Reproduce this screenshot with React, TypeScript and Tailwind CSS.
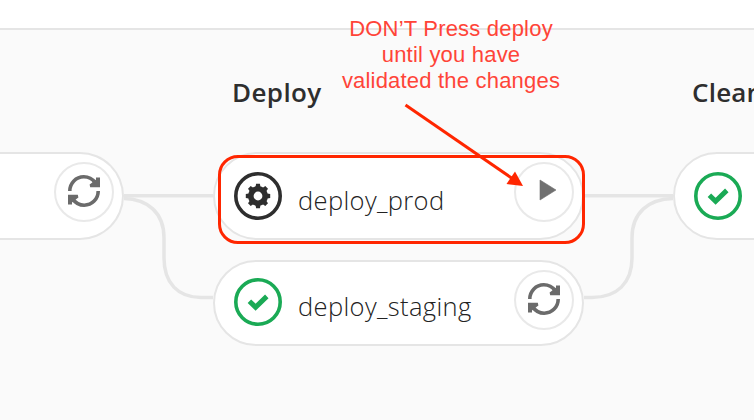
import type { ReactNode } from "react";

function RetryIcon() {
  return (
    <svg className="-mt-[3px]" width="34" height="34" viewBox="0 0 34 34" fill="none" aria-hidden="true">
      <path d="M2.800 17C2.800 9 9 2.800 16.800 2.800C21.600 2.800 25.500 5 28 8.600" stroke="#6b6b6b" strokeWidth="3.600" />
      <path d="M31.200 17C31.200 25 25 31.200 17.200 31.200C12.400 31.200 8.500 29 6 25.400" stroke="#6b6b6b" strokeWidth="3.600" />
      <path d="M33 3.600V13.200H23.200L22.600 10.600L26.600 7.400L29 5.600V3.600Z" fill="#6b6b6b" />
      <path d="M1 30.400V20.800H10.800L11.400 23.400L7.400 26.600L5 28.400V30.400Z" fill="#6b6b6b" />
    </svg>
  );
}

function PlayIcon() {
  return (
    <svg width="18" height="22" viewBox="0 0 18 22" aria-hidden="true">
      <path d="M1 1L17 11L1 21Z" fill="#707070" stroke="#707070" strokeWidth="0.600" strokeLinejoin="round" />
    </svg>
  );
}

function SuccessIcon() {
  return (
    <svg className="block shrink-0" width="48" height="48" viewBox="0 0 48 48" fill="none" aria-hidden="true">
      <circle cx="24" cy="24" r="22.200" stroke="#1aaa55" strokeWidth="3.600" />
      <path d="M15.400 23.200L21.600 29.200L32.800 18.400" stroke="#1aaa55" strokeWidth="5" />
    </svg>
  );
}

const teeth = [0, 45, 90, 135, 180, 225, 270, 315];

function ManualIcon() {
  return (
    <svg className="block shrink-0" width="48" height="48" viewBox="0 0 48 48" fill="none" aria-hidden="true">
      <circle cx="24" cy="24" r="22.200" stroke="#2e2e2e" strokeWidth="3.600" />
      <circle cx="24" cy="24" r="7.200" stroke="#2e2e2e" strokeWidth="5.600" />
      {teeth.map((angle) => (
        <path key={angle} d="M21.300 16L22.100 11.800H25.900L26.700 16Z" fill="#2e2e2e" transform={`rotate(${angle} 24 24)`} />
      ))}
    </svg>
  );
}

function ActionButton({ label, children }: { label: string; children: ReactNode }) {
  return (
    <button
      type="button"
      aria-label={label}
      className="flex size-[60px] shrink-0 items-center justify-center rounded-full border-2 border-[#e9e9e9] bg-white"
    >
      {children}
    </button>
  );
}

function Job({ name, icon, action, className }: { name: string; icon: ReactNode; action: ReactNode; className: string }) {
  return (
    <div className={`flex w-[371px] items-start rounded-full border-2 border-[#e5e5e5] bg-white pr-2 pl-[19px] ${className}`}>
      {icon}
      <span className="mt-[11px] ml-4 flex-1 text-[25.500px] leading-[34px] font-light tracking-[0.360px] text-[#222222]">{name}</span>
      {action}
    </div>
  );
}

export default function App() {
  return (
    <div className="relative h-[420px] w-[754px] overflow-hidden bg-[#fafafa] font-['Open_Sans','Noto_Sans',sans-serif]">
      <header className="h-[30px] border-b-2 border-[#e5e5e5] bg-white" />
      <main className="flex h-[390px] pt-[44px]">
        <section className="w-[124px] shrink-0 pt-[78px]">
          <div className="flex h-[88px] justify-end rounded-r-full border-y-2 border-r-2 border-[#e5e5e5] bg-white pt-2 pr-2">
            <ActionButton label="Retry"><RetryIcon /></ActionButton>
          </div>
        </section>
        <svg className="mt-[78px] shrink-0" width="89" height="194" viewBox="0 0 89 194" fill="none" stroke="#e5e5e5" strokeWidth="3.500" aria-hidden="true">
          <path d="M0 43.800H89" />
          <path d="M-2 46.500C24 46.500 40 61 40 86V106C40 131 54 145.500 77 145.500H89" />
        </svg>
        <section className="w-[371px] shrink-0">
          <h2 className="h-[78px] pl-[19px] text-[26px] leading-[36px] font-semibold tracking-[0.400px] text-[#2e2e2e]">Deploy</h2>
          <Job
            name="deploy_prod"
            className="h-[88px] pt-[18px]"
            icon={<ManualIcon />}
            action={<div className="-mt-[10px]"><ActionButton label="Play"><div className="-mt-[4px] ml-[8px]"><PlayIcon /></div></ActionButton></div>}
          />
          <Job
            name="deploy_staging"
            className="mt-5 h-[86px] pt-4"
            icon={<SuccessIcon />}
            action={<div className="-mt-2"><ActionButton label="Retry"><RetryIcon /></ActionButton></div>}
          />
        </section>
        <svg className="mt-[78px] shrink-0" width="89" height="194" viewBox="0 0 89 194" fill="none" stroke="#e5e5e5" strokeWidth="3.500" aria-hidden="true">
          <path d="M0 43.800H89" />
          <path d="M0 145.500H8C33 145.500 48 131 48 106V86C48 61 64 46.500 91 46.500" />
        </svg>
        <section className="w-[371px] shrink-0">
          <h2 className="h-[78px] pl-[19px] text-[26px] leading-[36px] font-semibold tracking-[0.200px] text-[#2e2e2e]">Clean</h2>
          <div className="h-[88px] rounded-l-full border-2 border-[#e5e5e5] bg-white pt-[18px] pl-[19px]"><SuccessIcon /></div>
        </section>
      </main>
      <div className="absolute top-[155px] left-[218px] h-[89px] w-[367px] rounded-[20px] border-3 border-[#ff2600]" />
      <p className="absolute top-[16px] left-[331px] w-[240px] text-center font-['Liberation_Sans',Arial,sans-serif] text-[22px] leading-[26px] tracking-[0.200px] text-[#ff4438]">
        DON’T Press deploy<br />until you have<br />validated the changes
      </p>
      <svg className="absolute top-[100px] left-[400px]" width="130" height="92" viewBox="400 100 130 92" aria-hidden="true">
        <path d="M405.500 105L513 179" stroke="#ff2600" strokeWidth="3" />
        <path d="M523 186L515 171.500L506.500 184Z" fill="#ff2600" />
      </svg>
    </div>
  );
}
